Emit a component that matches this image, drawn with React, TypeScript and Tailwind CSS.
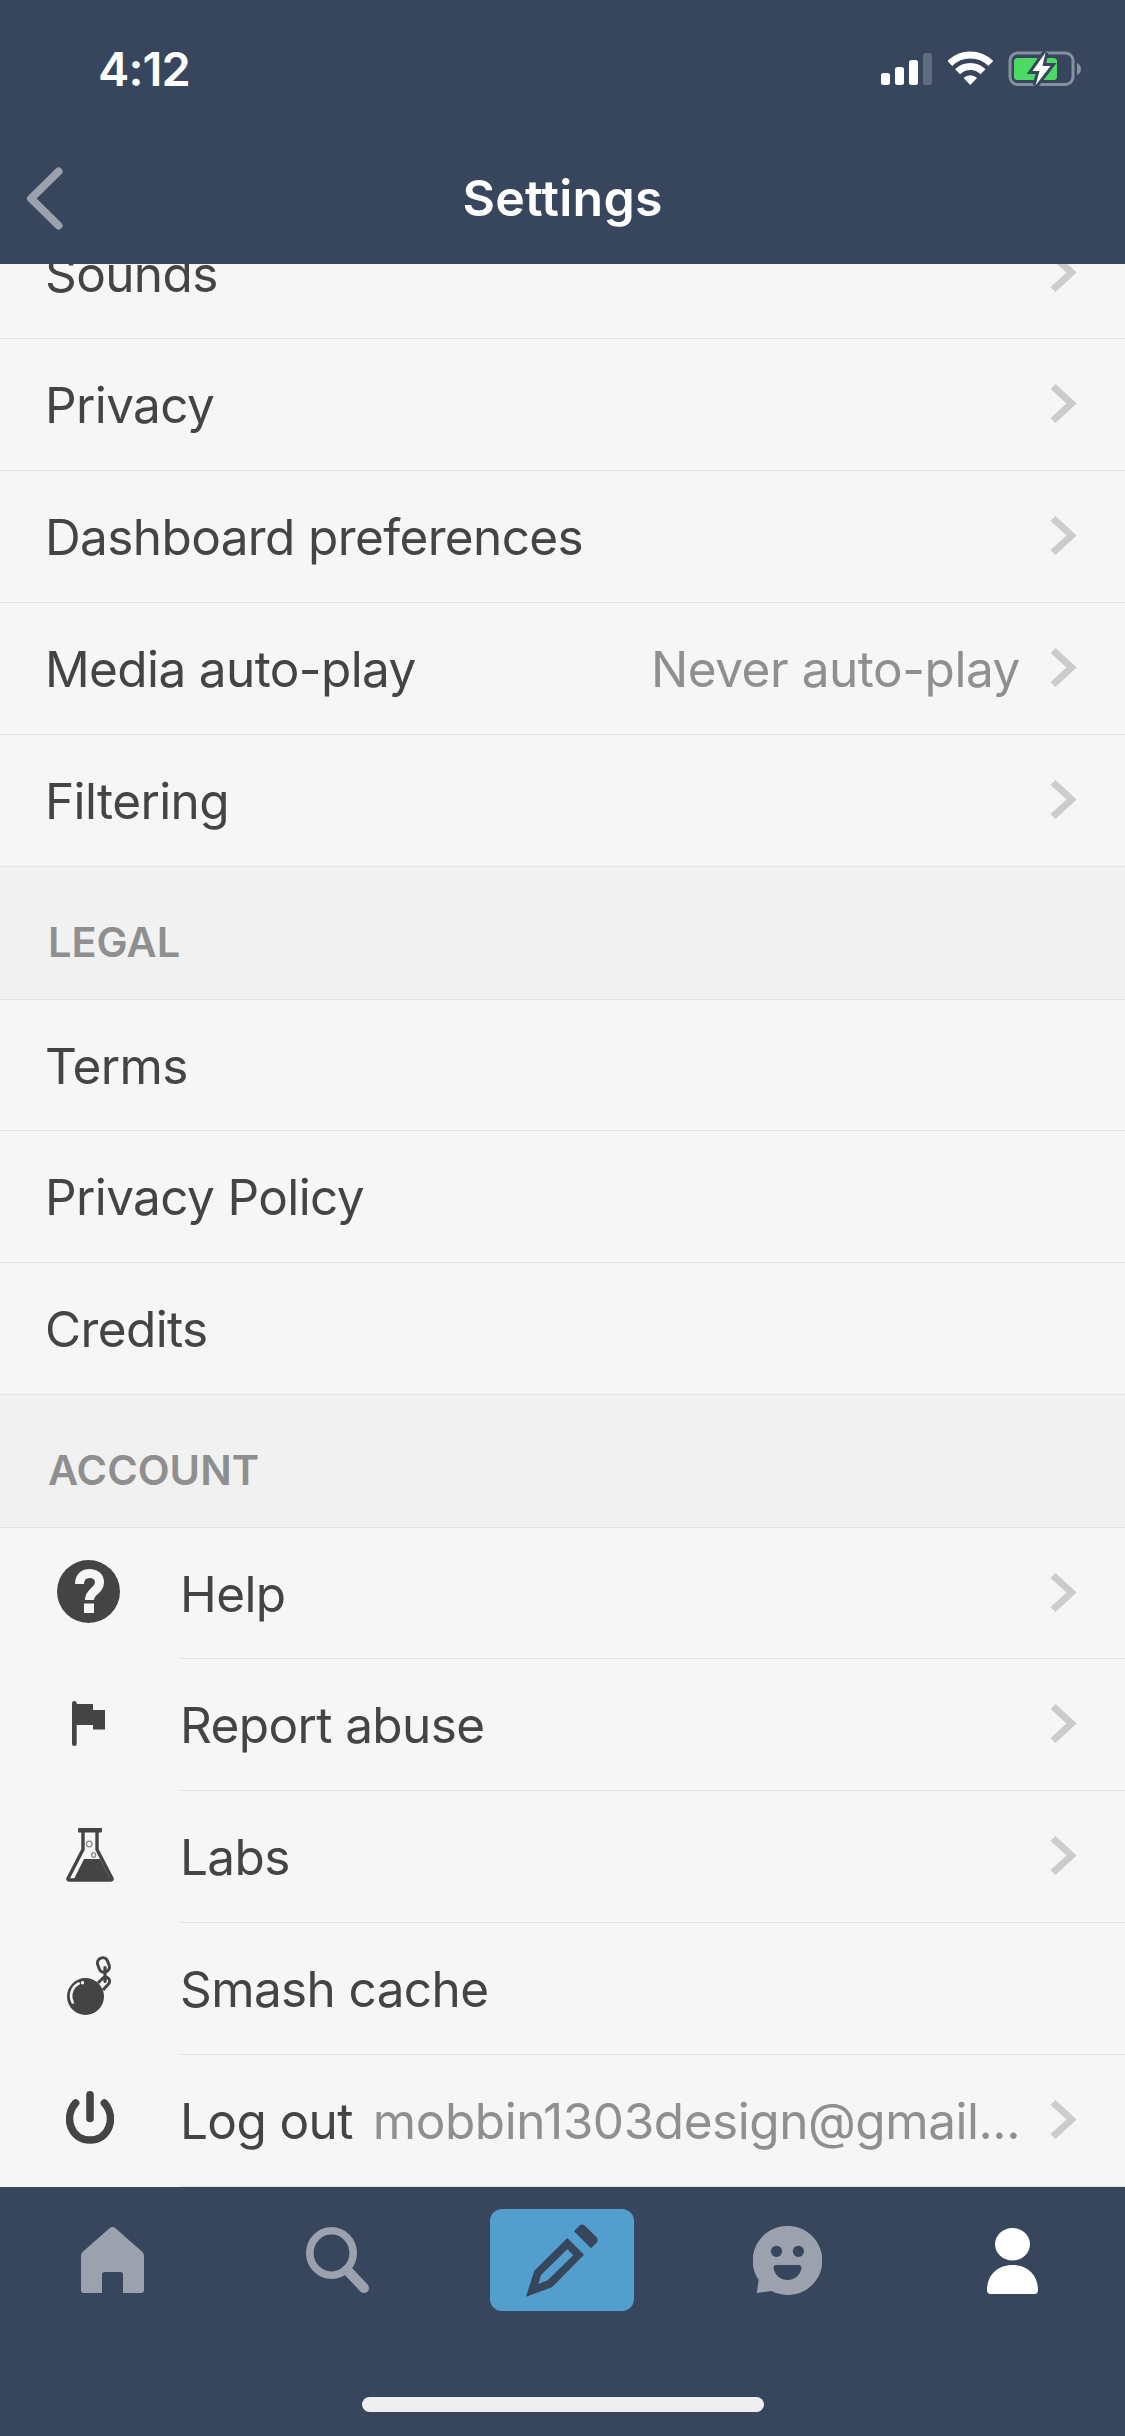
import React from 'react';

interface IRow {
    label: string;
    value?: string;
    icon?: React.ReactNode;
    chevron?: boolean;
}

const Chevron = () => (
    <svg className="ml-[30px] h-[39px] w-[28px] shrink-0" viewBox="0 0 28 39" fill="none" stroke="#cccccc" strokeWidth="7">
        <path d="M3 2.5 L21.5 19.5 L3 36.5" />
    </svg>
);

const HelpIcon = () => (
    <svg className="mr-[3px] size-[63px]" viewBox="0 0 63 63">
        <circle cx="31.5" cy="31.5" r="31.5" fill="#444444" />
        <path d="M22.5 24 C22.5 17 26.5 13.5 32.5 13.5 C38.5 13.5 42.5 17 42.5 22.5 C42.5 31 32.5 31 32.5 40" fill="none" stroke="#f6f6f6" strokeWidth="9" />
        <rect x="27" y="43.5" width="10" height="9.5" fill="#f6f6f6" />
    </svg>
);

const FlagIcon = () => (
    <svg className="mr-[3px] h-[45px] w-[33px]" viewBox="0 0 33 45" fill="#444444">
        <rect width="4.7" height="45" rx="2.3" />
        <path d="M0 3 H21 V9 H33 V28.5 H21 V24 H0 Z" />
    </svg>
);

const FlaskIcon = () => (
    <svg className="mb-px h-[54px] w-[48px]" viewBox="0 0 48 54">
        <rect x="12" y="0" width="24" height="4.4" rx="1" fill="#444444" />
        <path d="M17 4 V21.5 L2 50.5 Q1.5 52 3.5 52 H44.5 Q46.5 52 46 50.5 L31 21.5 V4" fill="none" stroke="#444444" strokeWidth="3.4" strokeLinejoin="round" />
        <path d="M18 31 H34 L45 52 H7.5 Z" fill="#444444" />
        <circle cx="23.2" cy="16" r="2.8" fill="none" stroke="#8a8a8a" strokeWidth="1.3" />
        <ellipse cx="27.7" cy="27" rx="2" ry="2.4" fill="none" stroke="#8a8a8a" strokeWidth="1.3" />
    </svg>
);

const BallIcon = () => (
    <svg className="mr-[2px] mb-[3px] h-[59px] w-[44px]" viewBox="0 0 44 59" fill="none" stroke="#444444">
        <rect x="31.2" y="1.6" width="10.5" height="14.6" rx="5.2" strokeWidth="3" transform="rotate(-20 36.5 9)" />
        <path d="M38 11.5 V25.5" strokeWidth="3.2" strokeLinecap="round" />
        <path d="M31 27 L35.5 22.5 C39.5 19 45 24 41.5 28 L36 34" strokeWidth="3" />
        <circle cx="18.5" cy="40.5" r="18.5" fill="#444444" stroke="none" />
        <path d="M5.7 46.5 C2 39 5 31 11.7 27.5" stroke="#f6f6f6" strokeWidth="2.6" strokeLinecap="round" />
        <circle cx="15.5" cy="26.8" r="1.7" fill="#f6f6f6" stroke="none" />
    </svg>
);

const PowerIcon = () => (
    <svg className="mb-[3px] h-[53px] w-[48px]" viewBox="0 0 48 53" fill="none" stroke="#444444" strokeWidth="7.6" strokeLinecap="round">
        <path d="M24 3.8 V27.5" />
        <path d="M9.6 12 C-2.5 26 4.5 49 24 49 C43.5 49 50.5 26 38.4 12" />
    </svg>
);

const general: IRow[] = [
    { label: 'Sounds', chevron: true },
    { label: 'Privacy', chevron: true },
    { label: 'Dashboard preferences', chevron: true },
    { label: 'Media auto-play', value: 'Never auto-play', chevron: true },
    { label: 'Filtering', chevron: true },
];

const legal: IRow[] = [{ label: 'Terms' }, { label: 'Privacy Policy' }, { label: 'Credits' }];

const account: IRow[] = [
    { label: 'Help', icon: <HelpIcon />, chevron: true },
    { label: 'Report abuse', icon: <FlagIcon />, chevron: true },
    { label: 'Labs', icon: <FlaskIcon />, chevron: true },
    { label: 'Smash cache', icon: <BallIcon /> },
    { label: 'Log out', value: 'mobbin1303design@gmail...', icon: <PowerIcon />, chevron: true },
];

const Row = ({ label, value, icon, chevron }: IRow) => (
    <li className="flex h-[132px] shrink-0 first:h-[131px]">
        {icon && <div className="flex w-[180px] shrink-0 items-center justify-center pb-1">{icon}</div>}
        <div className={`flex grow items-center border-b border-[#e3e3e3] pr-[47px] pb-[2px] ${icon ? '' : 'pl-[45px]'}`}>
            <span className="pt-1 tracking-[-0.62px] whitespace-nowrap">{label}</span>
            <span className="ml-auto pt-1 tracking-[-0.45px] whitespace-nowrap text-[#8f8f8f]">{value}</span>
            {chevron && <Chevron />}
        </div>
    </li>
);

const SectionTitle = ({ children }: { children: string }) => (
    <h2 className="flex h-[133px] items-center border-b border-[#e3e3e3] bg-[#f1f1f1] pt-[19px] pl-[48px] text-[41.5px] font-semibold text-[#8f8f8f]">
        {children}
    </h2>
);

const StatusBar = () => (
    <div className="flex h-[132px] items-start justify-between pt-[50px] pr-[43px] pl-[98px]">
        <span className="text-[47px] leading-[38px] font-semibold tracking-[-0.9px]">4:12</span>
        <div className="flex items-center gap-[14px]">
            <svg className="h-[36px] w-[53px]" viewBox="0 0 53 36" fill="#ffffff">
                <rect x="0" y="23" width="9" height="12" rx="2.5" />
                <rect x="14" y="17" width="9" height="18" rx="2.5" />
                <rect x="28" y="10" width="9" height="25" rx="2.5" />
                <rect x="42" y="3" width="9" height="32" rx="2.5" fill="#5f6c7f" />
            </svg>
            <svg className="h-[36px] w-[46px]" viewBox="0.7 0 46 36" fill="none" stroke="#ffffff" strokeWidth="7">
                <path d="M2.5 13.5 A29 29 0 0 1 43.5 13.5" />
                <path d="M10.3 21.7 A18 18 0 0 1 35.7 21.7" />
                <path d="M23 35 L16.3 28 A9.5 9.5 0 0 1 29.7 28 Z" fill="#ffffff" stroke="none" />
            </svg>
            <svg className="h-[36px] w-[74px]" viewBox="0 0 74 36">
                <rect x="2" y="3" width="63" height="31.5" rx="7.5" fill="none" stroke="#8790a0" strokeWidth="3" />
                <path d="M69 13 C74.3 15 74.3 23 69 25 Z" fill="#8790a0" />
                <rect x="6" y="8" width="43" height="22" rx="3.5" fill="#4cd964" />
                <path d="M37.5 2.5 L24.5 21 H31.5 L27.5 35.5 L42.5 16 H34.5 Z" fill="#ffffff" stroke="#37455d" strokeWidth="6" paintOrder="stroke" />
            </svg>
        </div>
    </div>
);

const TabBar = () => (
    <nav className="relative grid h-[249px] grid-cols-5 items-start justify-items-center bg-[#37455d] pt-[22px]">
        <div className="flex h-[102px] items-center">
            <svg className="h-[66px] w-[63px]" viewBox="0 0 63 66" fill="#9ba1ad">
                <path d="M28.5 1.2 Q31.5 -1 34.5 1.2 L61.5 25 Q63 26.5 63 29 V63 Q63 66 60 66 H42 V47.5 Q42 45 39.5 45 H23.5 Q21 45 21 47.5 V66 H3 Q0 66 0 63 V29 Q0 26.5 1.5 25 Z" />
            </svg>
        </div>
        <div className="flex h-[102px] items-center">
            <svg className="h-[66px] w-[63px]" viewBox="0 0 63 66" fill="none" stroke="#9ba1ad">
                <ellipse cx="25.5" cy="26" rx="21.7" ry="22.2" strokeWidth="7.6" />
                <path d="M41 43 L58 61" strokeWidth="10" strokeLinecap="round" />
            </svg>
        </div>
        <div className="mr-px flex h-[102px] w-[144px] items-center justify-center rounded-[12px] bg-[#529ecc]">
            <svg className="h-[73px] w-[72px]" viewBox="0 0 72 73" fill="#37455d">
                <path fillRule="evenodd" d="M0 72.7 L8.3 46.7 L41.3 14 L58 30.7 L26 63.3 Z M12.3 60 L15 51 L41.3 25.3 L47.3 31.3 L21.6 56.3 Z" />
                <path d="M48 7.3 L53.6 1.6 Q56 -0.4 58.3 1.2 L70.8 13.6 Q72.6 16 71 18.3 L65 24.3 Z" />
            </svg>
        </div>
        <div className="flex h-[102px] items-center">
            <svg className="h-[69px] w-[69px]" viewBox="0 0 69 69">
                <path d="M34.5 0 A34.5 34.5 0 1 1 18.7 65 L3.7 67 L5.7 54 A34.5 34.5 0 0 1 34.5 0 Z" fill="#9ba1ad" />
                <circle cx="23.5" cy="25.3" r="5.6" fill="#37455d" />
                <circle cx="45.4" cy="25.3" r="5.6" fill="#37455d" />
                <path d="M23.5 39 H45.5 Q48.5 39 48.5 42 C47 50 41 54 34.5 54 C28 54 22 50 20.5 42 Q20.5 39 23.5 39 Z" fill="#37455d" />
            </svg>
        </div>
        <div className="flex h-[102px] items-center">
            <svg className="mt-px h-[66px] w-[51px]" viewBox="0 0 51 66" fill="#ffffff">
                <ellipse cx="25.5" cy="16.3" rx="17.5" ry="16.3" />
                <path d="M25.5 37 C40 37 51 46.5 51 62 Q51 66 47.5 66 H3.5 Q0 66 0 62 C0 46.5 11 37 25.5 37 Z" />
            </svg>
        </div>
        <div className="absolute bottom-6 left-1/2 h-[15px] w-[402px] -translate-x-1/2 rounded-full bg-[#eeeeee]" />
    </nav>
);

const App = () => {
    return (
        <div className="flex h-[2436px] w-[1125px] flex-col overflow-hidden bg-[#f6f6f6] font-['Inter','Liberation_Sans',sans-serif] text-[49.5px] text-[#444444]">
            <header className="h-[264px] shrink-0 bg-[#37455d] text-white">
                <StatusBar />
                <div className="grid h-[132px] grid-cols-3 items-center">
                    <svg className="ml-[26px] h-[63px] w-[38px]" viewBox="0 0 38 63" fill="none" stroke="#9ba1ad" strokeWidth="8" strokeLinecap="round" strokeLinejoin="round">
                        <path d="M32.5 4.5 L5 31.5 L32.5 58.5" />
                    </svg>
                    <h1 className="text-center text-[50px] font-semibold tracking-[0.25px]">Settings</h1>
                </div>
            </header>

            <main className="shrink-0">
                {/* scrolled list, its first row is partly under the header */}
                <ul className="flex h-[603px] flex-col justify-end overflow-hidden">
                    {general.map((row) => (
                        <Row key={row.label} {...row} />
                    ))}
                </ul>
                <SectionTitle>LEGAL</SectionTitle>
                <ul>
                    {legal.map((row) => (
                        <Row key={row.label} {...row} />
                    ))}
                </ul>
                <SectionTitle>ACCOUNT</SectionTitle>
                <ul>
                    {account.map((row) => (
                        <Row key={row.label} {...row} />
                    ))}
                </ul>
            </main>

            <TabBar />
        </div>
    );
};

export default App;
